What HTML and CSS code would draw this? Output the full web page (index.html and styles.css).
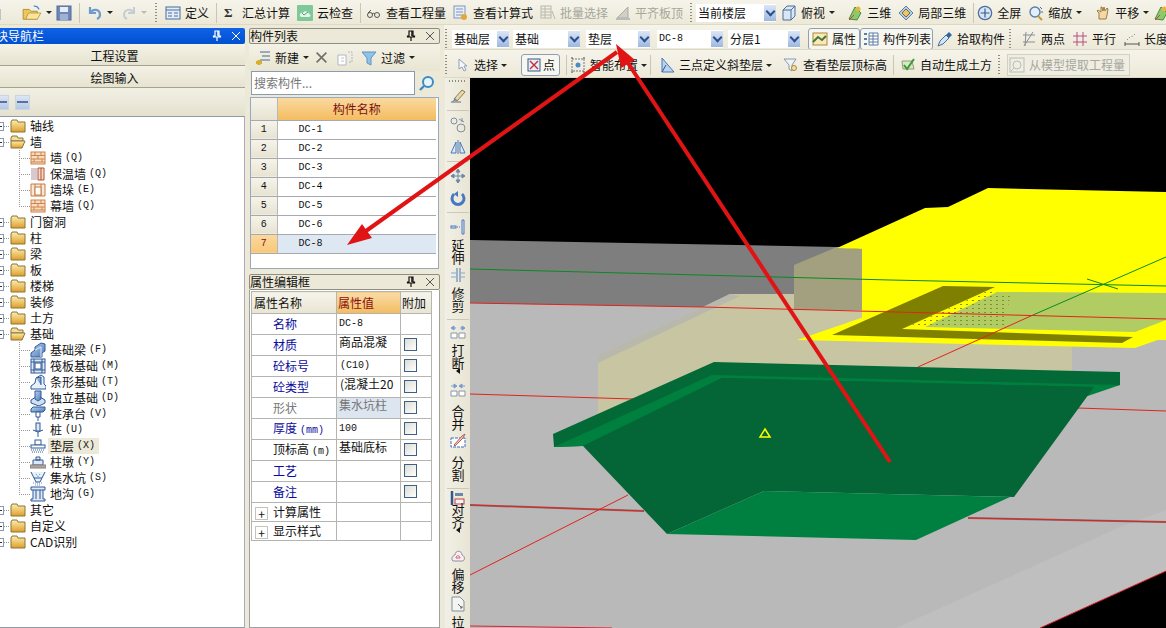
FILE: index.html
```html
<!DOCTYPE html>
<html lang="zh">
<head>
<meta charset="utf-8">
<title>绘图输入</title>
<link rel="stylesheet" href="styles.css">
</head>
<body>
<svg class="defs" aria-hidden="true">
<defs>
<linearGradient id="fg" x1="0" y1="0" x2="0" y2="1"><stop offset="0" stop-color="#fdeeb0"/><stop offset="1" stop-color="#dd9f2c"/></linearGradient>
<linearGradient id="bl" x1="0" y1="0" x2="1" y2="1"><stop offset="0" stop-color="#bcd3ef"/><stop offset="1" stop-color="#4a78b8"/></linearGradient>
<pattern id="dots" width="6" height="4" patternUnits="userSpaceOnUse"><rect width="2" height="1" fill="#7f8f2c"/></pattern>
<symbol id="new" viewBox="0 0 16 16"><path d="M3 1h7l3 3v11H3z" fill="#fff" stroke="#8a9ab0"/></symbol>
<symbol id="open" viewBox="0 0 22 18"><path d="M1 5h7l2 2h7v9H1z" fill="#eec65a" stroke="#a98a38"/><path d="M4 16l3-7h14l-4 7z" fill="#fbe59a" stroke="#b99a48"/><path d="M13 1l4 1 2 3" fill="none" stroke="#4d8fd0" stroke-width="1.5"/></symbol>
<symbol id="save" viewBox="0 0 16 16"><rect x="1" y="1" width="14" height="14" fill="#7088b8" stroke="#4f6a9c"/><rect x="4" y="2" width="8" height="5" fill="#e8eef8"/><rect x="4" y="9" width="8" height="6" fill="#9fb2d4"/></symbol>
<symbol id="undo" viewBox="0 0 16 16"><path d="M3 2v6h6M3 8c3-5 10-4 10 2 0 2-1 3-3 4" fill="none" stroke="#6f9ad0" stroke-width="2.2"/></symbol>
<symbol id="redo" viewBox="0 0 16 16"><path d="M13 2v6H7M13 8C10 3 3 4 3 10c0 2 1 3 3 4" fill="none" stroke="#c3cdd6" stroke-width="2"/></symbol>
<symbol id="define" viewBox="0 0 16 16"><rect x="1" y="2" width="14" height="12" fill="#e4edf8" stroke="#4a6d9c"/><path d="M1 5h14M3 8h4M3 11h4M9 8h4M9 11h4" stroke="#4a6d9c"/></symbol>
<symbol id="cloud" viewBox="0 0 16 16"><rect width="16" height="16" rx="1" fill="#7fc89a"/><path d="M3 11c-1-3 2-4 3-3 1-3 6-2 6 1 2 0 2 3 0 3H4z" fill="#e6f5ea"/><path d="M5 8l2 2 4-3" stroke="#58a070" fill="none"/></symbol>
<symbol id="glasses" viewBox="0 0 16 16"><circle cx="4" cy="10" r="2.5" fill="none" stroke="#555"/><circle cx="11" cy="10" r="2.5" fill="none" stroke="#555"/><path d="M6 9c1-1 2-1 3 0M2 8l3-3" stroke="#555" fill="none"/></symbol>
<symbol id="sheet" viewBox="0 0 16 16"><rect x="1" y="1" width="11" height="12" fill="#e8eef8" stroke="#7f96b8"/><path d="M3 4h7M3 7h7M3 10h7" stroke="#7f96b8"/><circle cx="11" cy="12" r="3" fill="#e2a83e"/></symbol>
<symbol id="batch" viewBox="0 0 16 16"><g fill="none" stroke="#b8b8ae"><rect x="1" y="1" width="10" height="12"/><path d="M1 4h10M1 7h10M1 10h10M5 1v12"/><path d="M12 6l3 8"/></g></symbol>
<symbol id="level" viewBox="0 0 16 16"><path d="M2 13L13 2v11z" fill="#d0d0c6" stroke="#aaa"/><rect x="1" y="13" width="14" height="2" fill="#bbb"/></symbol>
<symbol id="cube" viewBox="0 0 16 16"><path d="M2 5l4-4h8v10l-4 4H2z" fill="#d9e6f4" stroke="#4a6d9c"/><path d="M2 5h8v10M10 5l4-4" fill="none" stroke="#4a6d9c"/></symbol>
<symbol id="tri" viewBox="0 0 16 16"><path d="M2 14L8 2l6 6-4 7z" fill="#8dc86a" stroke="#4c8a40"/><circle cx="11" cy="4" r="2.5" fill="#e2b83e"/><path d="M2 15l5-5" stroke="#c84040"/></symbol>
<symbol id="local" viewBox="0 0 16 16"><path d="M8 1l7 7-7 7-7-7z" fill="#b8cde6" stroke="#5c7ea8"/><path d="M4 8l4-4 4 4-4 4z" fill="#e8c86a" stroke="#7a6a30"/></symbol>
<symbol id="full" viewBox="0 0 18 18"><circle cx="9" cy="9" r="7.5" fill="#d7e5f5" stroke="#4a6d9c" stroke-width="1.4"/><path d="M9 4v10M4 9h10" stroke="#35588a" stroke-width="1.3"/></symbol>
<symbol id="zoom" viewBox="0 0 16 16"><circle cx="7" cy="7" r="5" fill="#e4eefa" stroke="#5c7ea8" stroke-width="1.4"/><path d="M10 11l4 4" stroke="#c89a30" stroke-width="2"/><path d="M12 2l2 2M13 7h2" stroke="#4a6d9c"/></symbol>
<symbol id="pan" viewBox="0 0 16 16"><path d="M4 14V8L2 6l1-1 3 2V2h1l1 4 1-4 1 4 2-3 1 1-1 6-1 4z" fill="#f4d8a8" stroke="#9a7a40"/></symbol>
<symbol id="attr" viewBox="0 0 16 16"><rect x="1" y="2" width="14" height="12" fill="#fbe8b8" stroke="#a98a38"/><path d="M1 11l5-5 4 3 4-4" stroke="#3f7a3f" fill="none" stroke-width="2"/></symbol>
<symbol id="list" viewBox="0 0 16 16"><g fill="#5f7da4"><rect x="1" y="2" width="3" height="2"/><rect x="1" y="7" width="3" height="2"/><rect x="1" y="12" width="3" height="2"/></g><path d="M6 2h9v12H6zM6 5h9M6 8h9M6 11h9M10 2v12" fill="#fff" stroke="#5f7da4"/></symbol>
<symbol id="pick" viewBox="0 0 16 16"><path d="M1 15l2-5 6-6 3 3-6 6z" fill="#cfe4f6" stroke="#4a6d9c"/><path d="M9 4l3-3 3 3-3 3z" fill="#34689c"/></symbol>
<symbol id="two" viewBox="0 0 16 16"><path d="M2 4h12M2 11h12M5 1l-1 14M12 1L3 15" stroke="#8a8f96" fill="none"/></symbol>
<symbol id="par" viewBox="0 0 16 16"><path d="M1 5h14M1 11h14M5 1v14M11 1v14" stroke="#b05080" fill="none"/></symbol>
<symbol id="len" viewBox="0 0 16 16"><path d="M1 11v4M15 11v4M1 13h14" stroke="#555" fill="none"/><path d="M3 9l3-3 3-1 3-3" stroke="#3f8a3f" fill="none" stroke-dasharray="1 2"/></symbol>
<symbol id="cur" viewBox="0 0 16 16"><path d="M5 2v10l3-2 2 4 2-1-2-4h3z" fill="#f4f6fa" stroke="#8fa0b8"/></symbol>
<symbol id="pt" viewBox="0 0 16 16"><rect x="2" y="2" width="12" height="12" fill="#e8eef8" stroke="#35588a"/><path d="M4 4l8 8M12 4l-8 8" stroke="#c03030" stroke-width="1.4"/></symbol>
<symbol id="smart" viewBox="0 0 16 16"><rect x="2" y="2" width="12" height="12" fill="none" stroke="#777" stroke-dasharray="2 1"/><circle cx="8" cy="8" r="2.5" fill="#4a8ac8"/><path d="M1 1h2M13 1h2M1 15h2M13 15h2" stroke="#444"/></symbol>
<symbol id="slope" viewBox="0 0 16 16"><path d="M3 1v14h12z" fill="#bcd3ef" stroke="#4a78b8"/><path d="M3 15L7 8" stroke="#35588a"/></symbol>
<symbol id="view" viewBox="0 0 16 16"><path d="M1 2h12L9 8v6l-3-2V8z" fill="#eef3f8" stroke="#8a98a8"/><circle cx="11" cy="11" r="2.5" fill="#f4e0a0" stroke="#a98a38"/></symbol>
<symbol id="auto" viewBox="0 0 16 16"><path d="M2 4h10l2 8H3z" fill="#dbe8c8" stroke="#8aa070"/><path d="M4 8l3 4 7-10" fill="none" stroke="#3c9a3c" stroke-width="2"/></symbol>
<symbol id="model" viewBox="0 0 16 16"><rect x="1" y="1" width="14" height="14" fill="#eeeee4" stroke="#bcbcb0"/><circle cx="8" cy="8" r="4" fill="none" stroke="#bcbcb0"/><path d="M5 11l-3 3" stroke="#bcbcb0"/></symbol>
<symbol id="brush" viewBox="0 0 16 16"><path d="M1 14h10" stroke="#666"/><path d="M4 11l8-9 3 2-8 9z" fill="#e8d8a8" stroke="#8a7a50"/><path d="M2 14l3-4 2 2z" fill="#6a8abc"/></symbol>
<symbol id="circ" viewBox="0 0 16 16"><circle cx="4" cy="4" r="3" fill="none" stroke="#7f8f9f"/><circle cx="11" cy="11" r="4" fill="none" stroke="#7f8f9f"/><path d="M9 2l5 3M12 1v4" stroke="#7f8f9f"/></symbol>
<symbol id="mirror" viewBox="0 0 16 16"><path d="M8 1v14" stroke="#4a78b8"/><path d="M6 3v11H1zM10 3v11h5z" fill="#dfe8f4" stroke="#4a78b8"/></symbol>
<symbol id="move" viewBox="0 0 16 16"><path d="M8 1v14M1 8h14M8 1L6 4h4zM8 15l-2-3h4zM1 8l3-2v4zM15 8l-3-2v4z" fill="#6a88a8" stroke="#6a88a8"/></symbol>
<symbol id="rot" viewBox="0 0 16 16"><path d="M4 4a6 6 0 1 0 8 0" fill="none" stroke="#4a78c0" stroke-width="3"/><path d="M8 1v6l-4-3z" fill="#4a78c0"/></symbol>
<symbol id="ext" viewBox="0 0 16 16"><path d="M12 1h2v14h-2z" fill="#dfe8f4" stroke="#4a78b8"/><rect x="1" y="7" width="5" height="2" fill="#dfe8f4" stroke="#4a78b8"/><path d="M7 8h4" stroke="#4a78b8" stroke-dasharray="1 1"/></symbol>
<symbol id="trim" viewBox="0 0 16 16"><path d="M7 1v14M10 1v14" stroke="#4a78b8"/><path d="M1 6h5M1 10h5M11 6h4M11 10h4" stroke="#8aa6cc"/></symbol>
<symbol id="brk" viewBox="0 0 16 16"><path d="M1 4l3-2v4zM15 4l-3-2v4zM4 4h2M10 4h2" fill="#7a9ccc" stroke="#7a9ccc"/><path d="M1 9h6v5H1zM9 9h6v5H9z" fill="#fff" stroke="#8a96a6"/></symbol>
<symbol id="mrg" viewBox="0 0 16 16"><path d="M7 4L4 2v4zM9 4l3-2v4zM1 4h3M12 4h3" fill="#7a9ccc" stroke="#7a9ccc"/><path d="M1 9h6v5H1zM9 9h6v5H9z" fill="#fff" stroke="#8a96a6"/></symbol>
<symbol id="spl" viewBox="0 0 16 16"><rect x="1" y="5" width="14" height="9" fill="#fff" stroke="#3f6cc0" stroke-dasharray="3 1"/><path d="M4 12l8-9 3-2-2 4-8 8z" fill="#f0c8b0" stroke="#b06060"/></symbol>
<symbol id="ali" viewBox="0 0 16 16"><path d="M2 1v14" stroke="#35588a" stroke-width="2.5"/><rect x="5" y="3" width="8" height="3" fill="#6a88a8"/><rect x="5" y="9" width="9" height="5" fill="#f4f4f4" stroke="#c04040"/></symbol>
<symbol id="off" viewBox="0 0 16 16"><path d="M3 13c-3-3 1-6 2-6 0-5 7-5 7 0 3 1 3 5 1 6z" fill="#fbeef0" stroke="#8a8fa8"/><path d="M6 10c0-3 4-3 4 0z" fill="none" stroke="#d06070"/></symbol>
<symbol id="pull" viewBox="0 0 16 16"><path d="M2 1h8l4 4v10H2z" fill="#f4f4f0" stroke="#7f8f9f"/><path d="M8 8l4 4M10 12h2v-2" stroke="#666" fill="none"/></symbol>
<symbol id="add" viewBox="0 0 16 16"><path d="M5 2h10M7 6h8M5 10h10" stroke="#7f93ac" stroke-width="1.4"/><path d="M4 10v5M1 12.500h6" stroke="#d8b030" stroke-width="3"/></symbol>
<symbol id="del" viewBox="0 0 16 16"><path d="M2 2l12 12M14 2L2 14" stroke="#70706a" stroke-width="2"/></symbol>
<symbol id="copy" viewBox="0 0 16 16"><path d="M1 5h8v10H1z" fill="#fff" stroke="#b0b8c4"/><path d="M11 2h4v10h-3" fill="none" stroke="#b0b8c4" stroke-dasharray="2 1"/><path d="M4 8h3M4 11h3" stroke="#c0c4cc"/></symbol>
<symbol id="filter" viewBox="0 0 16 16"><path d="M1 2h14L10 8v7l-4-2V8z" fill="#8fc4ea" stroke="#5f94c0"/></symbol>
<symbol id="find" viewBox="0 0 16 16"><circle cx="9" cy="7" r="5" fill="#e8f4fb" stroke="#3b8cc4" stroke-width="2"/><path d="M5 11l-4 4" stroke="#3b8cc4" stroke-width="2.4"/></symbol>
<symbol id="pin" viewBox="0 0 10 12"><path d="M3 1h4v5h1.500v1h-7V6H3zM5 7v4" fill="none" stroke="currentColor" stroke-width="1.200"/><path d="M6 1v5" stroke="currentColor" stroke-width="1.500"/></symbol>
<symbol id="x" viewBox="0 0 10 10"><path d="M1 1l8 8M9 1L1 9" stroke="currentColor" fill="none"/></symbol>
<symbol id="folder" viewBox="0 0 16 14"><path d="M1 3l1-2h5l1 2h7v10H1z" fill="url(#fg)" stroke="#8a7434"/></symbol>
<symbol id="fopen" viewBox="0 0 16 14"><path d="M1 3l1-2h5l1 2h5v3H1z" fill="#f4dc9c" stroke="#8a7434"/><path d="M1 13V6h14l-3 7z" fill="url(#fg)" stroke="#8a7434"/></symbol>
<symbol id="brick" viewBox="0 0 16 14"><rect x="1" y="1" width="14" height="12" fill="#f6dcc0" stroke="#d0824a"/><path d="M1 4.500h14M1 8h14M1 11h14M5 1v3M11 1v3M8 4.500V8M4 8v3M12 8v3" stroke="#d0824a"/></symbol>
<symbol id="insul" viewBox="0 0 16 14"><rect x="1" y="1" width="6" height="12" fill="#d8c8d0"/><path d="M8 1h6v12H8z" fill="#f6dcc0" stroke="#b0503a"/><path d="M11 1v12" stroke="#b0503a"/></symbol>
<symbol id="pier" viewBox="0 0 16 14"><path d="M1 1h14v12H1zM5 1v12M11 1v12" fill="#f8e8d8" stroke="#c87840"/><path d="M5 4h6v8H5z" fill="#fff" stroke="#c87840"/></symbol>
<symbol id="fb" viewBox="0 0 16 16"><path d="M1 15v-4l4-3V5l6-4 4 1v7l-3 2v4z" fill="url(#bl)" stroke="#2f5a98"/><path d="M5 8l6-3v10" fill="none" stroke="#dfeaf6"/></symbol>
<symbol id="raft" viewBox="0 0 16 16"><rect x="1" y="1" width="14" height="14" fill="#dfe8f4" stroke="#2f5a98"/><path d="M4 1v14M12 1v14M1 4h14M1 12h14" stroke="#2f5a98"/><rect x="5" y="5" width="6" height="6" fill="#fff" stroke="#2f5a98"/></symbol>
<symbol id="strip" viewBox="0 0 16 16"><path d="M1 15v-3l4-3 1-5 5-3 3 2v7l2 2v3z" fill="#e8f0fa" stroke="#2f5a98"/><path d="M6 4l5-1v8" fill="url(#bl)" stroke="#2f5a98"/></symbol>
<symbol id="iso" viewBox="0 0 16 16"><path d="M1 10l5-3h4l5 3v3l-6 3-8-3z" fill="#cfe0f2" stroke="#2f5a98"/><path d="M5 1h6v8l-3 2-3-2z" fill="url(#bl)" stroke="#2f5a98"/></symbol>
<symbol id="cap" viewBox="0 0 16 16"><path d="M1 3l2-2h12v3l-2 2H1z" fill="url(#bl)" stroke="#2f5a98"/><path d="M6 6h4v5H6zM8 11v4" fill="#fff" stroke="#2f5a98"/></symbol>
<symbol id="pile" viewBox="0 0 16 16"><rect x="6" y="1" width="4" height="8" fill="#dfe8f4" stroke="#2f5a98"/><path d="M3 8l5 2 5-2M8 10v5" fill="none" stroke="#2f5a98"/></symbol>
<symbol id="cush" viewBox="0 0 16 16"><rect x="5" y="2" width="6" height="5" fill="#fff" stroke="#2f5a98"/><rect x="1" y="7" width="14" height="3" fill="#fff" stroke="#2f5a98"/><path d="M1 12h14M2 14h12" stroke="#2f5a98" stroke-dasharray="1 1"/></symbol>
<symbol id="pillar" viewBox="0 0 16 16"><path d="M6 3h4v3H6zM3 6h10v5H3z" fill="#dfe8f4" stroke="#2f5a98"/><rect x="0" y="11" width="16" height="3" fill="#b0a8a0" stroke="#8a8278"/></symbol>
<symbol id="sump" viewBox="0 0 16 16"><path d="M1 2l3 6h8l3-6M4 8l2 4h4l2-4" fill="#e8f0fa" stroke="#2f5a98"/><path d="M3 13h10M5 15h6M6 4l2 3 2-3" stroke="#6a8abc" stroke-dasharray="1 1" fill="none"/></symbol>
<symbol id="ditch" viewBox="0 0 16 16"><path d="M1 1h14v3h-2v9h2v2H1v-2h2V4H1z" fill="#dfe8f4" stroke="#2f5a98"/><path d="M3 4h10M6 4v9M10 4v9" stroke="#2f5a98"/></symbol>
</defs>
</svg>

<div class="app">
  <header class="bar top">
    <svg class="i clip"><use href="#new"/></svg>
    <svg class="i wide"><use href="#open"/></svg><span class="drop"></span>
    <svg class="i"><use href="#save"/></svg><span class="sep"></span>
    <svg class="i"><use href="#undo"/></svg><span class="drop"></span>
    <svg class="i ml4"><use href="#redo"/></svg><span class="drop off"></span><span class="grip ml4"></span>
    <span class="t"><svg class="i"><use href="#define"/></svg>定义</span><span class="sep"></span>
    <span class="t sig"><b class="sigma">Σ</b>汇总计算</span>
    <span class="t"><svg class="i"><use href="#cloud"/></svg>云检查</span><span class="sep"></span>
    <span class="t mn2"><svg class="i"><use href="#glasses"/></svg>查看工程量</span>
    <span class="t"><svg class="i"><use href="#sheet"/></svg>查看计算式</span>
    <span class="t off"><svg class="i"><use href="#batch"/></svg>批量选择</span>
    <span class="t off"><svg class="i"><use href="#level"/></svg>平齐板顶</span><span class="grip"></span>
    <span class="sel s-floor mn4">当前楼层<i></i></span>
    <span class="t mn2"><svg class="i"><use href="#cube"/></svg>俯视</span><span class="drop"></span>
    <span class="t ml8"><svg class="i"><use href="#tri"/></svg>三维</span>
    <span class="t"><svg class="i"><use href="#local"/></svg>局部三维</span><span class="sep"></span>
    <span class="t mn4"><svg class="i"><use href="#full"/></svg>全屏</span>
    <span class="t"><svg class="i"><use href="#zoom"/></svg>缩放</span><span class="drop"></span>
    <span class="t ml9"><svg class="i"><use href="#pan"/></svg>平移</span><span class="drop"></span>
    <svg class="i"><use href="#tri"/></svg>
  </header>

  <div class="main">
    <aside class="nav">
      <div class="title active"><span>模块导航栏</span><svg class="pin"><use href="#pin"/></svg><svg class="close"><use href="#x"/></svg></div>
      <div class="navbtn">工程设置</div>
      <div class="navbtn">绘图输入</div>
      <div class="navtools"><span class="mini"></span><span class="mini"></span></div>
      <div class="tree">
        <div class="r"><span class="exp"></span><span class="h"></span><svg class="fd"><use href="#folder"/></svg>轴线</div>
        <div class="r"><span class="exp"></span><span class="h"></span><svg class="fd"><use href="#fopen"/></svg>墙</div>
        <div class="r k"><span class="e"></span><svg class="ic"><use href="#brick"/></svg>墙<span class="en">(Q)</span></div>
        <div class="r k"><span class="e"></span><svg class="ic"><use href="#insul"/></svg>保温墙<span class="en">(Q)</span></div>
        <div class="r k"><span class="e"></span><svg class="ic"><use href="#pier"/></svg>墙垛<span class="en">(E)</span></div>
        <div class="r k"><span class="e end"></span><svg class="ic"><use href="#brick"/></svg>幕墙<span class="en">(Q)</span></div>
        <div class="r"><span class="exp"></span><span class="h"></span><svg class="fd"><use href="#folder"/></svg>门窗洞</div>
        <div class="r"><span class="exp"></span><span class="h"></span><svg class="fd"><use href="#folder"/></svg>柱</div>
        <div class="r"><span class="exp"></span><span class="h"></span><svg class="fd"><use href="#folder"/></svg>梁</div>
        <div class="r"><span class="exp"></span><span class="h"></span><svg class="fd"><use href="#folder"/></svg>板</div>
        <div class="r"><span class="exp"></span><span class="h"></span><svg class="fd"><use href="#folder"/></svg>楼梯</div>
        <div class="r"><span class="exp"></span><span class="h"></span><svg class="fd"><use href="#folder"/></svg>装修</div>
        <div class="r"><span class="exp"></span><span class="h"></span><svg class="fd"><use href="#folder"/></svg>土方</div>
        <div class="r"><span class="exp"></span><span class="h"></span><svg class="fd"><use href="#fopen"/></svg>基础</div>
        <div class="r k"><span class="e"></span><svg class="ic"><use href="#fb"/></svg>基础梁<span class="en">(F)</span></div>
        <div class="r k"><span class="e"></span><svg class="ic"><use href="#raft"/></svg>筏板基础<span class="en">(M)</span></div>
        <div class="r k"><span class="e"></span><svg class="ic"><use href="#strip"/></svg>条形基础<span class="en">(T)</span></div>
        <div class="r k"><span class="e"></span><svg class="ic"><use href="#iso"/></svg>独立基础<span class="en">(D)</span></div>
        <div class="r k"><span class="e"></span><svg class="ic"><use href="#cap"/></svg>桩承台<span class="en">(V)</span></div>
        <div class="r k"><span class="e"></span><svg class="ic"><use href="#pile"/></svg>桩<span class="en">(U)</span></div>
        <div class="r k"><span class="e"></span><svg class="ic"><use href="#cush"/></svg><span class="cur">垫层<span class="en">(X)</span></span></div>
        <div class="r k"><span class="e"></span><svg class="ic"><use href="#pillar"/></svg>柱墩<span class="en">(Y)</span></div>
        <div class="r k"><span class="e"></span><svg class="ic"><use href="#sump"/></svg>集水坑<span class="en">(S)</span></div>
        <div class="r k"><span class="e end"></span><svg class="ic"><use href="#ditch"/></svg>地沟<span class="en">(G)</span></div>
        <div class="r"><span class="exp"></span><span class="h"></span><svg class="fd"><use href="#folder"/></svg>其它</div>
        <div class="r"><span class="exp"></span><span class="h"></span><svg class="fd"><use href="#folder"/></svg>自定义</div>
        <div class="r"><span class="exp"></span><span class="h"></span><svg class="fd"><use href="#folder"/></svg>CAD识别</div>
      </div>
    </aside>

    <section class="mid">
      <div class="listpanel">
        <div class="title"><span>构件列表</span><svg class="pin"><use href="#pin"/></svg><svg class="close"><use href="#x"/></svg></div>
        <div class="listtools">
          <span class="t"><svg class="i"><use href="#add"/></svg>新建</span><span class="drop"></span>
          <svg class="i small ml2"><use href="#del"/></svg>
          <svg class="i ml2"><use href="#copy"/></svg>
          <span class="t ml1"><svg class="i"><use href="#filter"/></svg>过滤</span><span class="drop"></span>
        </div>
        <div class="search"><span class="field">搜索构件...</span><svg class="i"><use href="#find"/></svg></div>
        <div class="gridwrap">
          <table class="comp">
            <tr class="hd"><th></th><th>构件名称</th></tr>
            <tr><th>1</th><td>DC-1</td></tr>
            <tr><th>2</th><td>DC-2</td></tr>
            <tr><th>3</th><td>DC-3</td></tr>
            <tr><th>4</th><td>DC-4</td></tr>
            <tr><th>5</th><td>DC-5</td></tr>
            <tr><th>6</th><td>DC-6</td></tr>
            <tr class="on"><th>7</th><td>DC-8</td></tr>
          </table>
        </div>
      </div>
      <div class="proppanel">
        <div class="title"><span>属性编辑框</span><svg class="pin"><use href="#pin"/></svg><svg class="close"><use href="#x"/></svg></div>
        <div class="propbody">
          <table class="prop">
            <tr class="hd"><th class="n">属性名称</th><th class="v">属性值</th><th class="a">附加</th></tr>
            <tr><td class="n blue">名称</td><td class="v en">DC-8</td><td></td></tr>
            <tr><td class="n blue">材质</td><td class="v up">商品混凝</td><td><span class="cb"></span></td></tr>
            <tr><td class="n blue">砼标号</td><td class="v in en">(C10)</td><td><span class="cb"></span></td></tr>
            <tr><td class="n blue">砼类型</td><td class="v in up">(混凝土20</td><td><span class="cb"></span></td></tr>
            <tr><td class="n gray">形状</td><td class="v dis up">集水坑柱</td><td><span class="cb"></span></td></tr>
            <tr><td class="n blue">厚度<span class="en">(mm)</span></td><td class="v en">100</td><td><span class="cb"></span></td></tr>
            <tr><td class="n">顶标高<span class="en">(m)</span></td><td class="v up">基础底标</td><td><span class="cb"></span></td></tr>
            <tr><td class="n blue">工艺</td><td class="v"></td><td><span class="cb"></span></td></tr>
            <tr><td class="n blue">备注</td><td class="v"></td><td><span class="cb"></span></td></tr>
            <tr class="low"><td class="g"><span class="plus">+</span>计算属性</td><td class="v"></td><td></td></tr>
            <tr class="low"><td class="g"><span class="plus">+</span>显示样式</td><td class="v"></td><td></td></tr>
          </table>
        </div>
      </div>
    </section>

    <section class="work">
      <div class="bar row2">
        <span class="grip first"></span>
        <span class="sel s1">基础层<i></i></span>
        <span class="sel s2">基础<i></i></span>
        <span class="sel s3">垫层<i></i></span>
        <span class="sel s4"><span class="en">DC-8</span><i></i></span>
        <span class="sel s5">分层1<i></i></span>
        <span class="btns"><span class="t btn b1"><svg class="i"><use href="#attr"/></svg>属性</span><span class="t btn b2"><svg class="i"><use href="#list"/></svg>构件列表</span></span>
        <span class="t"><svg class="i"><use href="#pick"/></svg>拾取构件</span>
        <span class="grip"></span>
        <span class="t ml5"><svg class="i"><use href="#two"/></svg>两点</span>
        <span class="t ml3"><svg class="i"><use href="#par"/></svg>平行</span>
        <span class="t ml4"><svg class="i"><use href="#len"/></svg>长度</span>
      </div>
      <div class="bar row3">
        <span class="grip first"></span>
        <span class="t"><svg class="i"><use href="#cur"/></svg>选择</span><span class="drop"></span>
        <span class="t btn b3 ml11"><svg class="i"><use href="#pt"/></svg>点</span><span class="sep"></span>
        <span class="t mn3"><svg class="i"><use href="#smart"/></svg>智能布置</span><span class="drop"></span><span class="sep"></span>
        <span class="t ml2"><svg class="i"><use href="#slope"/></svg>三点定义斜垫层</span><span class="drop"></span>
        <span class="t ml8"><svg class="i"><use href="#view"/></svg>查看垫层顶标高</span><span class="sep"></span>
        <span class="t"><svg class="i"><use href="#auto"/></svg>自动生成土方</span><span class="grip"></span>
        <span class="t off lastbtn"><svg class="i"><use href="#model"/></svg>从模型提取工程量</span>
      </div>
      <div class="stage">
        <div class="vbar">
          <span class="vgrip"></span>
          <svg class="i"><use href="#brush"/></svg><span class="hsep"></span>
          <svg class="i"><use href="#circ"/></svg>
          <svg class="i"><use href="#mirror"/></svg><span class="hsep"></span>
          <svg class="i"><use href="#move"/></svg>
          <svg class="i"><use href="#rot"/></svg><span class="hsep"></span>
          <svg class="i"><use href="#ext"/></svg><span class="vt">延伸</span>
          <svg class="i"><use href="#trim"/></svg><span class="vt">修剪</span><span class="hsep"></span>
          <svg class="i pull-up"><use href="#brk"/></svg><span class="vt">打断</span><span class="tip"></span>
          <svg class="i after-tip"><use href="#mrg"/></svg><span class="vt push">合并</span>
          <svg class="i"><use href="#spl"/></svg><span class="vt push">分割</span><span class="hsep"></span>
          <svg class="i pull-more"><use href="#ali"/></svg><span class="vt tight">对齐</span><span class="tip"></span>
          <svg class="i after-tip2"><use href="#off"/></svg><span class="vt">偏移</span>
          <svg class="i"><use href="#pull"/></svg><span class="vt">拉伸</span>
        </div>
        <svg class="scene" viewBox="470 78 696 550" preserveAspectRatio="none">
          <rect x="470" y="78" width="696" height="550" fill="#000"/>
          <path d="M470 240L837 247 864 310V330H470z" fill="#7e7e7e"/>
          <path d="M470 303L703 307 1166 319V628H470z" fill="#b9b9b9"/>
          <path d="M896 628L1120 527 1166 510V571L1040 628z" fill="#bfbfbf"/>
          <path d="M1040 628L1166 571V628z" fill="#000"/>
          <path d="M1040 628L1166 571" stroke="#e02030" fill="none"/>
          <path d="M470 626L612 628" stroke="#e02030" fill="none"/>
          <path d="M598 355L703 307 730 294H795L864 310 1072 320V375L598 440z" fill="#c8c5a3"/>
          <path d="M598 355L703 307 730 294 740 296 598 363z" fill="#b9b8ac"/>
          <path d="M794 265L837 247 862 249 864 310 794 310z" fill="#a3a080"/>
          <path d="M837 248L925 208 948 207 988 188 1166 192V340H862V249z" fill="#ff0"/>
          <path d="M890 308L1166 318V337L1135 348 797 340z" fill="#ff0"/>
          <path d="M943 286L995 287 902 329 1133 337 1122 343 832 335z" fill="#808000"/>
          <path d="M997 292L1166 293V320L1135 332 925 327z" fill="#b2cc64"/>
          <path d="M985 294L1010 296 1005 326 925 326z" fill="url(#dots)"/>
          <path d="M990 290L905 328 925 328 997 292z" fill="url(#dots)"/>
          <path d="M470 269L890 280 1166 286" stroke="#0a8a20" fill="none"/>
          <path d="M1033 315L1166 257M1087 279L1118 289" stroke="#0a8a20" fill="none"/>
          <path d="M470 303L703 307 1166 319" stroke="#e0241c" fill="none"/>
          <path d="M470 394L633 399M1078 408L1166 411" stroke="#e0241c" fill="none"/>
          <path d="M470 505L644 511M968 518L1166 522" stroke="#8a6a6a" stroke-width="2" fill="none"/>
          <path d="M470 505L644 511M968 518L1166 522" stroke="#e0241c" fill="none"/>
          <path d="M470 575L628 495M918 367L1033 315" stroke="#e0241c" fill="none"/>
          <path d="M553 434L714 362 1120 372V385L583 446 554 447z" fill="#036a37"/>
          <path d="M554 447L583 446 722 378 1094 387 1076 400 1120 385 712 375z" fill="#00803f"/>
          <path d="M583 446L722 378 1094 387 1014 497 764 491 667 534z" fill="#046636"/>
          <path d="M764 491L1010 497 916 540 667 534z" fill="#008040"/>
          <path d="M765 429L770 437H760z" fill="none" stroke="#ff0" stroke-width="1.500"/>
        </svg>
      </div>
    </section>
  </div>

  <svg class="arrows" viewBox="0 0 1166 628">
    <path d="M890 462L626 60" stroke="#e01414" stroke-width="4" fill="none"/>
    <path d="M616 44L635 60 621 68z" fill="#e01414"/>
    <path d="M617 52L366 231" stroke="#e01414" stroke-width="4" fill="none"/>
    <path d="M347 245L372 238 362 224z" fill="#e01414"/>
  </svg>
</div>
</body>
</html>
```
FILE: styles.css
```css
* { box-sizing: border-box; }
html, body { margin: 0; height: 100%; overflow: hidden; }
body {
  font: 12px/16px "Noto Sans CJK SC", "Liberation Sans", sans-serif;
  color: #111;
  background: #ece9d8;
}
.defs { width: 0; height: 0; display: block; overflow: hidden; }
.app { position: relative; width: 1166px; height: 628px; display: flex; flex-direction: column; overflow: hidden; }
.en { font: 10px/16px "Liberation Mono", monospace; }
.r .en, .n .en { margin-left: 3px; }
.i { width: 16px; height: 16px; flex: none; display: block; }
.i.wide { width: 20px; margin-left: 12px; }
.i.clip { margin-left: -13px; }
.i.small { width: 13px; height: 13px; }
.ml1 { margin-left: 1px; } .ml2 { margin-left: 2px; } .ml3 { margin-left: 3px; } .ml4 { margin-left: 4px; }
.ml5 { margin-left: 5px; } .ml8 { margin-left: 8px; } .ml9 { margin-left: 9px; } .ml11 { margin-left: 11px; }
.mn2 { margin-left: -2px; } .mn3 { margin-left: -3px; } .mn4 { margin-left: -4px; }

/* toolbars */
.bar {
  display: flex; align-items: center; gap: 7px; white-space: nowrap; overflow: hidden;
  background: linear-gradient(#f6f4ea, #ece9d8);
  border-bottom: 1px solid #dcd9c6;
}
.top { height: 25px; flex: none; padding-top: 1px; }
.t { display: inline-flex; align-items: center; gap: 4px; flex: none; }
.off { color: #a6a69c; }
.sig { gap: 9px; }
.sigma { font: bold 13px/16px "Liberation Serif", serif; color: #333; width: 9px; }
.drop { flex: none; width: 6px; height: 0; border: 3px solid transparent; border-top: 3px solid #222; border-bottom: 0; margin: 0 -3px; }
.drop.off { border-top-color: #bbb; }
.sep { flex: none; width: 1px; height: 20px; background: #c9c6b2; }
.grip { flex: none; width: 2px; height: 20px; background: repeating-linear-gradient(#8d8b7c 0 1px, transparent 1px 3px); margin-right: 1px; }

.sel { flex: none; display: flex; align-items: center; justify-content: space-between; height: 18px; padding-left: 2px; background: #fff; }
.sel i { display: block; width: 12px; height: 16px; background: linear-gradient(#dbe6f6, #9db8e0); }
.sel i::after { content: ""; display: block; width: 5px; height: 5px; border: solid #2c4f8c; border-width: 0 2px 2px 0; transform: rotate(45deg); margin: 3px auto 0; }
.s-floor { width: 80px; }
.s1 { width: 57px; } .s2 { width: 67px; }
.s3 { width: 64px; margin-left: 2px; }
.s4 { width: 66px; margin-left: 3px; }
.s5 { width: 72px; margin-left: 1px; }

.main { flex: 1; display: flex; min-height: 0; }

/* docking titles */
.title {
  flex: none; display: flex; align-items: center; height: 16px; margin: 3px 0 0;
  background: #ece9d8; border: 1px solid #8f8d7e; border-radius: 2px;
}
.title span { flex: 1; }
.title.active { background: linear-gradient(#1062e6, #0050d0); color: #fff; border: 0; }
.pin { width: 10px; height: 12px; color: #111; margin-right: 9px; }
.close { width: 10px; height: 10px; color: #555; margin-right: 4px; }
.active .pin, .active .close { color: #fff; }

/* navigation */
.nav { flex: none; width: 263px; margin-left: -18px; margin-right: 4px; display: flex; flex-direction: column; padding-left: 2px; }
.navbtn { flex: none; height: 22px; line-height: 23px; text-align: center; background: linear-gradient(#f4f2e6, #e6e3d0); border-bottom: 1px solid #a5a38f; }
.navtools { flex: none; height: 28px; display: flex; align-items: center; gap: 6px; padding-left: 10px; background: linear-gradient(#f2f0e4, #e4e1ce); }
.mini { display: flex; align-items: center; justify-content: center; width: 15px; height: 15px; background: linear-gradient(#dce6f4, #b4c8e4); border: 1px solid #c9d4e4; }
.mini::after { content: ""; width: 11px; height: 2px; background: #5a70a0; }
.tree { flex: 1; background: #fff; border: 1px solid #8f9aa8; border-right-color: #aab; padding: 1px 0 0; }
.r { display: flex; align-items: center; height: 16px; white-space: nowrap; }
.exp { flex: none; width: 9px; height: 9px; margin-left: 10px; border: 1px solid #8a9aae; background: #fff; }
.exp::after { content: ""; display: block; width: 5px; height: 1px; background: #333; margin: 3px 1px; }
.h { flex: none; width: 6px; height: 1px; background: repeating-linear-gradient(90deg, #999 0 1px, transparent 1px 2px); }
.fd { flex: none; width: 16px; height: 14px; margin-right: 4px; }
.e {
  flex: none; width: 11px; height: 16px; margin-left: 34px;
  background-image: repeating-linear-gradient(#999 0 1px, transparent 1px 2px), repeating-linear-gradient(90deg, #999 0 1px, transparent 1px 2px);
  background-size: 1px 100%, 100% 1px; background-position: 0 0, 0 50%; background-repeat: no-repeat;
}
.e.end { background-size: 1px 50%, 100% 1px; }
.ic { flex: none; width: 16px; height: 16px; margin-right: 4px; }
.cur { display: flex; background: #ece9d8; margin-left: -2px; padding: 0 4px 0 2px; }

/* middle column */
.mid { flex: none; width: 191px; margin-right: 3px; display: flex; flex-direction: column; }
.listpanel { flex: none; height: 244px; display: flex; flex-direction: column; background: #ece9d8; }
.listtools { flex: none; height: 27px; display: flex; align-items: center; gap: 7px; padding-left: 6px; background: linear-gradient(#f4f2e6, #e8e5d2); }
.search { flex: none; height: 24px; display: flex; align-items: center; gap: 4px; padding-left: 2px; }
.field { width: 164px; height: 24px; line-height: 20px; background: #fff; border: 1px solid #8b9bb0; padding: 1px 2px; color: #777; }
.gridwrap { flex: 1; margin: 2px 1px 0; background: #fff; border: 1px solid #9aa8bc; }
.comp { border-collapse: collapse; table-layout: fixed; width: 185px; }
.comp th, .comp td { height: 19px; padding: 0; border-bottom: 1px solid #a8a8b0; font-weight: normal; }
.comp th { width: 26px; background: linear-gradient(#f6f4ea, #e6e3d2); text-align: center; border-right: 1px solid #b8b8b8; font: 10px/16px "Liberation Mono", monospace; }
.comp td { padding-left: 21px; font: 10px/16px "Liberation Mono", monospace; }
.comp .hd th { height: 22px; }
.comp .hd th + th { width: auto; background: linear-gradient(#f9d9a0, #f4bc60); color: #7a1010; border-right: 0; font: 12px/16px "Noto Sans CJK SC", sans-serif; }
.comp .on th { background: linear-gradient(#fbd89e, #f8c878); color: #7a1010; }
.comp .on td { background: #dde8f3; }
.proppanel { flex: 1; display: flex; flex-direction: column; margin-top: 2px; min-height: 0; }
.propbody { flex: 1; background: #fff; border: 1px solid #a0a0a0; border-top: 0; padding: 1px 0 0 1px; }
.prop { border-collapse: collapse; table-layout: fixed; width: 181px; }
.prop th, .prop td { height: 21px; padding: 0; border: 1px solid #b4b4b0; font-weight: normal; overflow: hidden; white-space: nowrap; }
.prop .hd th { height: 22px; background: linear-gradient(#f6f4ea, #e8e5d4); text-align: left; padding-left: 2px; }
.prop .hd .v { background: linear-gradient(#f9dca8, #f4bc60); color: #8a1010; padding-left: 1px; }
.prop .hd .a { padding-left: 1px; }
.prop .n { width: 85px; padding-left: 21px; }
.prop th.n { padding-left: 2px; }
.prop .v { width: 64px; padding-left: 2px; }
.prop td.in { padding-left: 3px; }
.prop td.up { vertical-align: top; line-height: 14px; }
.prop .blue { color: #0a0a9c; }
.prop .gray { color: #777; }
.prop .dis { background: #dde6f0; color: #777; }
.prop .low td { height: 19px; }
.prop .g { padding-left: 3px; }
.plus { display: inline-block; width: 13px; height: 13px; line-height: 11px; margin-right: 5px; border: 1px solid #c4c4bc; text-align: center; vertical-align: -2px; }
.cb { display: block; width: 13px; height: 13px; margin: 3px 0 0 3px; border: 1px solid #3e6084; background: linear-gradient(135deg, #dcdcd4, #fff); }
.prop td:last-child { vertical-align: top; }

/* work area */
.work { flex: 1; min-width: 0; display: flex; flex-direction: column; }
.row2 { height: 25px; flex: none; gap: 4px; margin-left: 1px; padding-top: 3px; }
.row3 { height: 28px; flex: none; gap: 6px; margin-left: 1px; padding-top: 3px; }
.grip.first { margin-left: 1px; }
.btns { display: flex; flex: none; margin-left: 4px; }
.btn { height: 22px; padding: 0 3px; background: #f7f6ef; border: 1px solid #8fa0b4; border-radius: 3px; }
.b1 { width: 52px; padding-left: 3px; }
.b2 { width: 73px; padding-left: 2px; }
.b3 { width: 39px; padding: 0 2px 0 4px; gap: 1px; }
.lastbtn { height: 22px; padding: 0 4px 0 1px; background: #f0eee2; border: 1px solid #d2d0c0; }
.stage { flex: 1; min-height: 0; display: flex; }
.vbar { flex: none; width: 25px; margin-left: 2px; display: flex; flex-direction: column; align-items: center; gap: 6px; overflow: hidden; background: linear-gradient(90deg, #f2f0e6, #e8e5d4); }
.vgrip { flex: none; width: 18px; height: 2px; margin-top: 2px; background: repeating-linear-gradient(90deg, #8d8b7c 0 1px, transparent 1px 3px); }
.hsep { flex: none; width: 22px; height: 1px; background: #cbc8b4; }
.vt { flex: none; writing-mode: vertical-rl; text-orientation: upright; line-height: 14px; font-size: 13px; margin-top: -2px; }
.vt + .i { margin-top: -4px; }
.vt.push { margin-top: 1px; }
.vt.tight { margin-top: -9px; }
.i.pull-up { margin-top: -2px; }
.i.after-tip { margin-top: 2px; }
.i.pull-more { margin-top: -5px; }
.i.after-tip2 { margin-top: 9px; }
.tip { flex: none; width: 0; height: 0; border: 3px solid transparent; border-right: 4px solid #111; border-left: 0; margin-top: -8px; }
.scene { flex: 1; min-width: 0; height: 100%; display: block; }
.arrows { position: absolute; left: 0; top: 0; width: 1166px; height: 628px; pointer-events: none; }
```
